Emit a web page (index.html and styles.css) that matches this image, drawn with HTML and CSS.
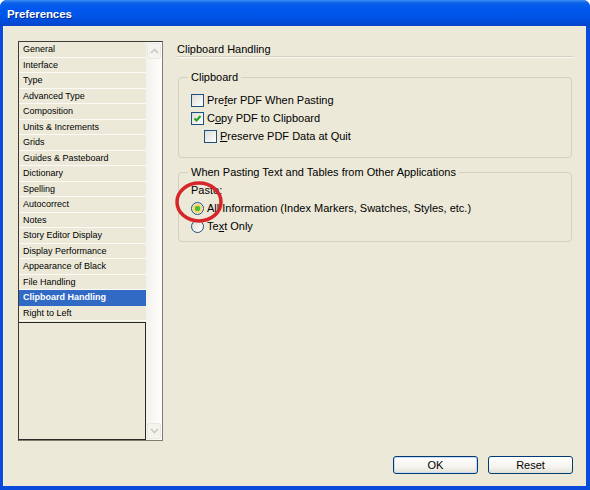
FILE: index.html
```html
<!DOCTYPE html>
<html>
<head>
<meta charset="utf-8">
<title>Preferences</title>
<link rel="stylesheet" href="styles.css">
</head>
<body>
<div class="window">
  <div class="titlebar"><span class="title">Preferences</span></div>
  <div class="client">
    <div class="main">
      <div class="sidebar">
        <div class="list">
          <ul class="items">
            <li>General</li>
            <li>Interface</li>
            <li>Type</li>
            <li>Advanced Type</li>
            <li>Composition</li>
            <li>Units &amp; Increments</li>
            <li>Grids</li>
            <li>Guides &amp; Pasteboard</li>
            <li>Dictionary</li>
            <li>Spelling</li>
            <li>Autocorrect</li>
            <li>Notes</li>
            <li>Story Editor Display</li>
            <li>Display Performance</li>
            <li>Appearance of Black</li>
            <li>File Handling</li>
            <li class="selected">Clipboard Handling</li>
            <li>Right to Left</li>
          </ul>
          <div class="blank"></div>
        </div>
        <div class="scrollbar">
          <span class="sbtn"><svg viewBox="0 0 9 6" class="caret"><path d="M1 5 L4.5 1.5 L8 5" /></svg></span>
          <span class="track"></span>
          <span class="sbtn"><svg viewBox="0 0 9 6" class="caret"><path d="M1 1 L4.5 4.5 L8 1" /></svg></span>
        </div>
      </div>
      <div class="panel">
        <div class="heading">Clipboard Handling</div>
        <fieldset class="group g1">
          <legend>Clipboard</legend>
          <div class="row"><span class="check"></span><span>Pre<u>f</u>er PDF When Pasting</span></div>
          <div class="row"><span class="check checked"><svg viewBox="0 0 11 11"><path d="M2.5 5.5 L4.5 7.5 L8.5 3" /></svg></span><span>C<u>o</u>py PDF to Clipboard</span></div>
          <div class="row indent"><span class="check"></span><span><u>P</u>reserve PDF Data at Quit</span></div>
        </fieldset>
        <fieldset class="group g2">
          <legend>When Pasting Text and Tables from Other Applications</legend>
          <div class="row">Paste:</div>
          <div class="row"><span class="radio on"></span><span>All Information (Index Markers, Swatches, Styles, etc.)</span></div>
          <div class="row"><span class="radio"></span><span>Te<u>x</u>t Only</span></div>
        </fieldset>
      </div>
    </div>
    <div class="footer">
      <button class="btn default">OK</button>
      <button class="btn">Reset</button>
    </div>
  </div>
  <svg class="annot" width="60" height="52" viewBox="0 0 60 52"><ellipse cx="30" cy="26" rx="22" ry="19" /></svg>
</div>
</body>
</html>
```
FILE: styles.css
```css
* { box-sizing: border-box; }
html, body { margin: 0; padding: 0; background: #fff; }
body { width: 590px; height: 490px; overflow: hidden; font-family: "Liberation Sans", Arial, sans-serif; font-size: 11px; color: #000; }

.window {
  position: relative;
  width: 590px;
  height: 490px;
  display: flex;
  flex-direction: column;
  background: #0A4BDC;
  border-radius: 7px 7px 0 0;
  overflow: hidden;
}
.titlebar {
  height: 26px;
  flex: none;
  background: linear-gradient(to bottom, #3C8EF3 0px, #0A62E8 3px, #0058EE 8px, #0055E8 16px, #0249D5 23px, #0A43C8 26px);
  display: flex;
  align-items: center;
  padding-left: 7px;
}
.title {
  color: #fff;
  font-weight: bold;
  font-size: 11.5px;
  letter-spacing: -0.1px;
  text-shadow: 1px 1px 0 #0A2A8A;
  margin-top: 1px;
}
.client {
  flex: 1;
  background: #ECE9D8;
  margin: 0 4px 4px 3px;
  padding: 15px 13px 0 14px;
  display: flex;
  flex-direction: column;
  border-left: 1px solid #F4F3EE;
}
.main { display: flex; height: 400px; }

.sidebar {
  width: 145px;
  height: 400px;
  border: 1px solid #3D3D36;
  border-right-color: #7F7D72;
  border-bottom-color: #7F7D72;
  display: flex;
}
.list { width: 127px; display: flex; flex-direction: column; }
.items { list-style: none; margin: 0; padding: 0; }
.items li {
  height: 15.5px;
  line-height: 15px;
  font-size: 9px;
  padding-left: 4px;
  background: #ECE9D8;
  border-bottom: 1px solid #FBFAF4;
  white-space: nowrap;
}
.items li.selected { background: #316AC5; color: #fff; font-weight: bold; border-bottom-color: #316AC5; }
.blank { flex: 1; border: 1px solid #2A2A26; border-left: 0; background: #ECE9D8; margin-top: 0.5px; }
.scrollbar {
  width: 16px;
  display: flex;
  flex-direction: column;
  background: linear-gradient(to right, #F3F2EC, #FEFEFD);
}
.track { flex: 1; }
.sbtn {
  height: 16px;
  margin: 1px;
  border: 1px solid #E9E8E2;
  border-radius: 2px;
  background: #F4F3EE;
  display: flex;
  align-items: center;
  justify-content: center;
}
.caret { width: 9px; height: 6px; }
.caret path { fill: none; stroke: #C9C8C0; stroke-width: 1.6; }

.panel { margin-left: 14px; width: 398px; display: flex; flex-direction: column; }
.heading {
  height: 16px;
  padding-top: 1px;
  line-height: 14px;
  border-bottom: 1px solid #D3D0C2;
  box-shadow: 0 1px 0 #FAF9F4;
}
.group {
  margin: 0 1px;
  min-inline-size: 0;
  border: 1px solid #D3D0C2;
  border-radius: 4px;
  padding: 7px 0 12px 12px;
}
.group legend { padding: 0 3px; margin-left: -3px; line-height: 14px; }
.g1 { margin-top: 13px; }
.g2 { margin-top: 7px; padding-top: 2px; padding-bottom: 6px; }
.row { height: 18px; display: flex; align-items: center; gap: 3px; white-space: nowrap; }
.row.indent { margin-left: 13px; }
.row u { text-decoration: underline; text-underline-offset: 1px; }

.check {
  width: 13px; height: 13px; flex: none;
  border: 1px solid #1C5180;
  background: linear-gradient(135deg, #DCDBD5 0%, #F2F1EC 60%, #FFFFFF 100%);
  display: flex; align-items: center; justify-content: center;
}
.check svg { width: 11px; height: 11px; }
.check path { fill: none; stroke: #21A121; stroke-width: 2; }
.radio {
  width: 13px; height: 13px; flex: none;
  border: 1px solid #1C5180;
  border-radius: 50%;
  background: linear-gradient(135deg, #DCDBD5 0%, #F2F1EC 60%, #FFFFFF 100%);
}
.radio.on { background: radial-gradient(circle, #4CBF3A 0 2.5px, #F8D86A 3px 4.5px, #F0EEE4 5px); }

.footer { display: flex; justify-content: flex-end; gap: 10px; margin-top: 15px; }
.btn {
  width: 85px; height: 18px;
  font-family: "Liberation Sans", Arial, sans-serif;
  font-size: 11px;
  color: #000;
  padding: 0;
  border: 1px solid #003C74;
  border-radius: 3px;
  background: linear-gradient(to bottom, #FFFFFF 0%, #F5F4EF 60%, #E3E1D6 100%);
  line-height: 16px;
}
.btn.default { box-shadow: inset 0 0 0 1px #C9D9F5; }

.annot { position: absolute; left: 169px; top: 176px; overflow: visible; }
.annot ellipse { fill: none; stroke: #D7262A; stroke-width: 3.5; }
```
